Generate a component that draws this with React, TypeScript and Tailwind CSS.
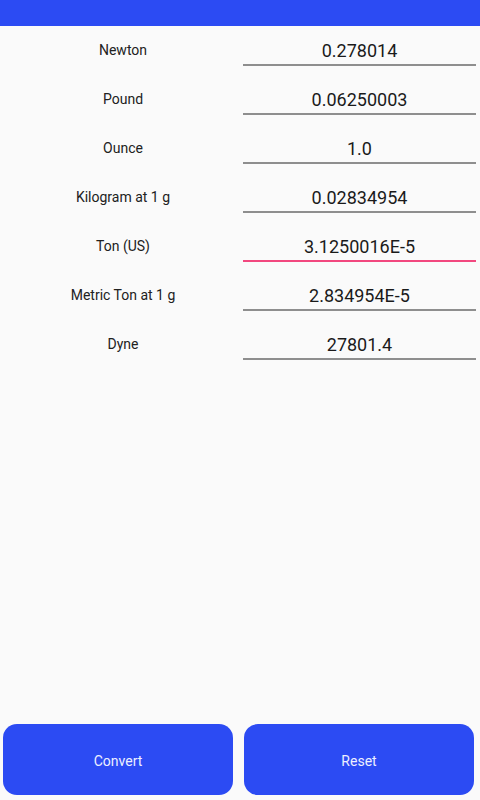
const rows: { label: string; value: string; active?: boolean }[] = [
  { label: "Newton", value: "0.278014" },
  { label: "Pound", value: "0.06250003" },
  { label: "Ounce", value: "1.0" },
  { label: "Kilogram at 1 g", value: "0.02834954" },
  { label: "Ton (US)", value: "3.1250016E-5", active: true },
  { label: "Metric Ton at 1 g", value: "2.834954E-5" },
  { label: "Dyne", value: "27801.4" },
];

export default function App() {
  return (
    <div className="flex h-[800px] w-[480px] flex-col bg-[#fafafa] font-['Roboto',sans-serif]">
      <header className="h-[26px] shrink-0 bg-[#2c4bf3]" />

      <main className="flex-1">
        {rows.map((r) => (
          <div key={r.label} className="flex h-[49px]">
            <div className="w-[243px] pl-[3px] pt-[12px] text-center text-[14px] leading-[24px] text-[#212121]">
              {r.label}
            </div>
            <div className="w-[233px] pt-[12px]">
              <div className="pt-[1px] text-center text-[18px] leading-[23px] text-[#1a1a1a]">{r.value}</div>
              <div className={"mt-[2px] h-[2px] " + (r.active ? "bg-[#f2487f]" : "bg-[#8e8e8e]")} />
            </div>
          </div>
        ))}
      </main>

      <footer className="flex gap-[11px] px-[3px] pb-[5px]">
        <button className="h-[71px] w-[230px] rounded-[14px] bg-[#2c4bf3] pt-[3px] text-[14px] text-[#eef0ff]">
          Convert
        </button>
        <button className="h-[71px] w-[230px] rounded-[14px] bg-[#2c4bf3] pt-[3px] text-[14px] text-[#eef0ff]">
          Reset
        </button>
      </footer>
    </div>
  );
}
